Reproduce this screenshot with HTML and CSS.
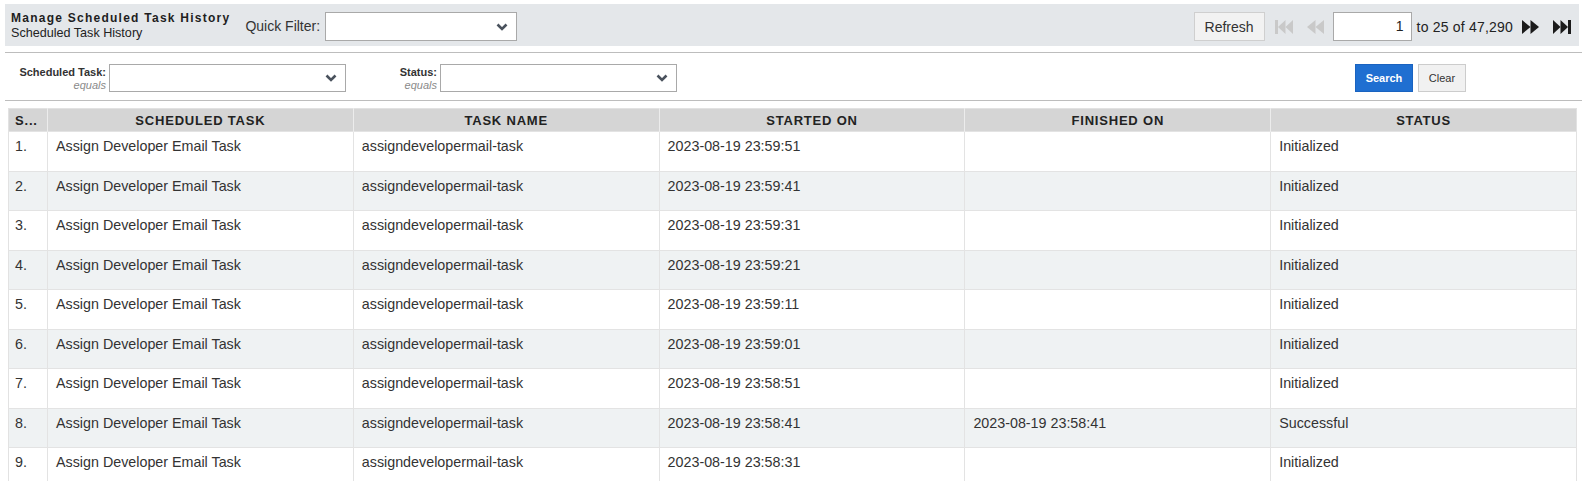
FILE: index.html
```html
<!DOCTYPE html>
<html>
<head>
<meta charset="utf-8">
<title>Manage Scheduled Task History</title>
<link rel="stylesheet" href="styles.css">
</head>
<body>
<div class="page">
  <div class="toolbar">
    <div class="title-block">
      <div class="title">Manage Scheduled Task History</div>
      <div class="subtitle">Scheduled Task History</div>
    </div>
    <label class="qf-label">Quick Filter:</label>
    <div class="select qf-select">
      <svg class="chev" width="12" height="8" viewBox="0 0 12 8"><path d="M1.5 1.5 L6 6 L10.5 1.5" fill="none" stroke="#4a525d" stroke-width="2.6"/></svg>
    </div>
    <div class="pager">
      <button class="btn refresh">Refresh</button>
      <svg class="pg-icon pg-first" width="18" height="14" viewBox="0 0 18 14"><rect x="0" y="0" width="3" height="14" fill="#c9c9c9"/><polygon points="3,7 10.5,0 10.5,14" fill="#c9c9c9"/><polygon points="10.5,7 18,0 18,14" fill="#c9c9c9"/></svg>
      <svg class="pg-icon pg-prev" width="17" height="14" viewBox="0 0 17 14"><polygon points="0,7 8.5,0 8.5,14" fill="#c9c9c9"/><polygon points="8.5,7 17,0 17,14" fill="#c9c9c9"/></svg>
      <div class="page-input">1</div>
      <span class="range">to 25 of 47,290</span>
      <svg class="pg-icon pg-next" width="17" height="14" viewBox="0 0 17 14"><polygon points="0,0 8.5,7 0,14" fill="#1b1b1b"/><polygon points="8.5,0 17,7 8.5,14" fill="#1b1b1b"/></svg>
      <svg class="pg-icon pg-last" width="18" height="14" viewBox="0 0 18 14"><polygon points="0,0 7.5,7 0,14" fill="#1b1b1b"/><polygon points="7.5,0 15,7 7.5,14" fill="#1b1b1b"/><rect x="15" y="0" width="3" height="14" fill="#1b1b1b"/></svg>
    </div>
  </div>

  <div class="filters">
    <div class="fgroup">
      <div class="flabel"><div class="fname">Scheduled Task:</div><div class="fop">equals</div></div>
      <div class="select fselect">
        <svg class="chev" width="12" height="8" viewBox="0 0 12 8"><path d="M1.5 1.5 L6 6 L10.5 1.5" fill="none" stroke="#4a525d" stroke-width="2.6"/></svg>
      </div>
    </div>
    <div class="fgroup">
      <div class="flabel"><div class="fname">Status:</div><div class="fop">equals</div></div>
      <div class="select fselect">
        <svg class="chev" width="12" height="8" viewBox="0 0 12 8"><path d="M1.5 1.5 L6 6 L10.5 1.5" fill="none" stroke="#4a525d" stroke-width="2.6"/></svg>
      </div>
    </div>
    <div class="factions">
      <button class="btn-search">Search</button>
      <button class="btn-clear">Clear</button>
    </div>
  </div>

  <table class="grid">
    <colgroup>
      <col class="c-num"><col class="c-wide"><col class="c-wide"><col class="c-wide"><col class="c-wide"><col class="c-wide">
    </colgroup>
    <thead>
      <tr><th>S...</th><th>Scheduled Task</th><th>Task Name</th><th>Started On</th><th>Finished On</th><th>Status</th></tr>
    </thead>
    <tbody>
      <tr><td>1.</td><td>Assign Developer Email Task</td><td>assigndevelopermail-task</td><td>2023-08-19 23:59:51</td><td></td><td>Initialized</td></tr>
      <tr><td>2.</td><td>Assign Developer Email Task</td><td>assigndevelopermail-task</td><td>2023-08-19 23:59:41</td><td></td><td>Initialized</td></tr>
      <tr><td>3.</td><td>Assign Developer Email Task</td><td>assigndevelopermail-task</td><td>2023-08-19 23:59:31</td><td></td><td>Initialized</td></tr>
      <tr><td>4.</td><td>Assign Developer Email Task</td><td>assigndevelopermail-task</td><td>2023-08-19 23:59:21</td><td></td><td>Initialized</td></tr>
      <tr><td>5.</td><td>Assign Developer Email Task</td><td>assigndevelopermail-task</td><td>2023-08-19 23:59:11</td><td></td><td>Initialized</td></tr>
      <tr><td>6.</td><td>Assign Developer Email Task</td><td>assigndevelopermail-task</td><td>2023-08-19 23:59:01</td><td></td><td>Initialized</td></tr>
      <tr><td>7.</td><td>Assign Developer Email Task</td><td>assigndevelopermail-task</td><td>2023-08-19 23:58:51</td><td></td><td>Initialized</td></tr>
      <tr><td>8.</td><td>Assign Developer Email Task</td><td>assigndevelopermail-task</td><td>2023-08-19 23:58:41</td><td>2023-08-19 23:58:41</td><td>Successful</td></tr>
      <tr><td>9.</td><td>Assign Developer Email Task</td><td>assigndevelopermail-task</td><td>2023-08-19 23:58:31</td><td></td><td>Initialized</td></tr>
    </tbody>
  </table>
</div>
</body>
</html>
```
FILE: styles.css
```css
html, body {
  margin: 0;
  background: #ffffff;
  font-family: "Liberation Sans", Arial, sans-serif;
  color: #333333;
  overflow: hidden;
}

.page {
  padding: 4px 0 0 5px;
}

/* top toolbar */
.toolbar {
  height: 42px;
  margin-right: 3px;
  background: #e4e7ea;
  display: flex;
  align-items: center;
  padding: 0 8px 0 6px;
}

.title-block {
  display: flex;
  flex-direction: column;
  margin-top: 1px;
}

.title {
  font-size: 12px;
  font-weight: bold;
  letter-spacing: 1.25px;
  color: #1e1e1e;
  line-height: 15px;
}

.subtitle {
  font-size: 12.6px;
  line-height: 15px;
  color: #222222;
}

.qf-label {
  font-size: 14px;
  color: #333333;
  margin-left: 15px;
  margin-right: 5px;
  margin-top: 2px;
}

.select {
  position: relative;
  background: #ffffff;
  border: 1px solid #a9a9a9;
  box-sizing: border-box;
}

.chev {
  position: absolute;
  right: 8px;
  top: 50%;
  margin-top: -4px;
}

.qf-select {
  width: 192px;
  height: 29px;
  margin-top: 3px;
}

.pager {
  margin-left: auto;
  display: flex;
  align-items: center;
  margin-top: 3px;
}

.btn {
  font-family: "Liberation Sans", Arial, sans-serif;
  font-size: 14px;
  color: #333333;
  background: #f2f2f2;
  border: 1px solid #cfcfcf;
  height: 29px;
  width: 71px;
  padding: 0;
}

.pg-icon {
  display: block;
}

.pg-first { margin-left: 10px; }
.pg-prev { margin-left: 14px; }
.pg-next { margin-left: 9px; }
.pg-last { margin-left: 14px; }

.page-input {
  width: 79px;
  height: 29px;
  box-sizing: border-box;
  border: 1px solid #a9a9a9;
  background: #ffffff;
  margin-left: 9px;
  text-align: right;
  font-size: 14px;
  line-height: 27px;
  padding-right: 7px;
  color: #222222;
}

.range {
  font-size: 14px;
  letter-spacing: 0.2px;
  color: #222222;
  margin-left: 5px;
}

/* filter row */
.filters {
  border-top: 1px solid #bdbdbd;
  border-bottom: 1px solid #bdbdbd;
  margin-top: 6px;
  padding: 11px 116px 8px 13px;
  display: flex;
  align-items: flex-start;
  gap: 3px;
}

.fgroup {
  display: flex;
  align-items: flex-start;
  gap: 3px;
}

.flabel {
  width: 88px;
  text-align: right;
  padding-top: 2px;
  white-space: nowrap;
}

.fname {
  font-size: 11px;
  font-weight: bold;
  color: #333333;
  line-height: 13px;
}

.fop {
  font-size: 11px;
  font-style: italic;
  color: #8a8a8a;
  line-height: 13px;
}

.fselect {
  width: 237px;
  height: 28px;
}

.factions {
  margin-left: auto;
  display: flex;
  gap: 5px;
}

.btn-search {
  width: 58px;
  height: 28px;
  border: 1px solid #1a63c0;
  background: #1f6fd1;
  color: #ffffff;
  font-family: "Liberation Sans", Arial, sans-serif;
  font-size: 11px;
  font-weight: bold;
  padding: 0;
}

.btn-clear {
  width: 48px;
  height: 28px;
  border: 1px solid #cccccc;
  background: #f1f1f1;
  color: #333333;
  font-family: "Liberation Sans", Arial, sans-serif;
  font-size: 11px;
  padding: 0;
}

/* grid */
.grid {
  margin: 7px 0 0 3px;
  width: 1568px;
  border-collapse: collapse;
  table-layout: fixed;
  border: 1px solid #e2e2e2;
}

.c-num { width: 39px; }
.c-wide { width: 305.8px; }

.grid th {
  box-sizing: border-box;
  background: #d5d5d5;
  height: 23px;
  padding: 0 6px;
  font-size: 13px;
  font-weight: bold;
  letter-spacing: 0.8px;
  text-transform: uppercase;
  color: #222222;
  text-align: center;
  border-left: 1px solid #ececec;
  white-space: nowrap;
  overflow: hidden;
}

.grid th:first-child {
  text-align: left;
  border-left: none;
}

.grid td {
  height: 39.5px;
  box-sizing: border-box;
  padding: 6px 8px 0 8px;
  vertical-align: top;
  font-size: 14.3px;
  line-height: 16px;
  color: #333333;
  border-left: 1px solid #e3e3e3;
  border-top: 1px solid #e3e3e3;
  white-space: nowrap;
}

.grid td:first-child {
  padding-left: 6px;
  border-left: none;
}

.grid tbody tr:nth-child(even) td {
  background: #eff2f3;
}
```
